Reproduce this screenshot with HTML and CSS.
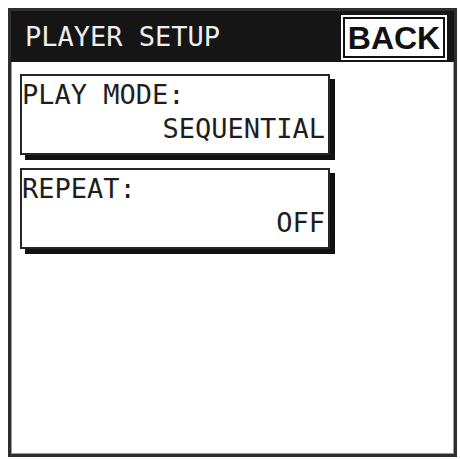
FILE: index.html
```html
<!DOCTYPE html>
<html>
<head>
<meta charset="utf-8">
<link rel="stylesheet" href="styles.css">
</head>
<body>
<div class="frame">
  <div class="header">
    <div class="title">PLAYER SETUP</div>
    <div class="back"><div class="back-inner">BACK</div></div>
  </div>
  <div class="content">
    <div class="card">
      <div class="label">PLAY MODE:</div>
      <div class="value">SEQUENTIAL</div>
    </div>
    <div class="card">
      <div class="label">REPEAT:</div>
      <div class="value">OFF</div>
    </div>
  </div>
</div>
</body>
</html>
```

FILE: styles.css
```css
html, body {
  margin: 0;
  padding: 0;
  background: #fff;
}

.frame {
  box-sizing: border-box;
  margin: 8px 0 0 8px;
  width: 449px;
  height: 449px;
  border: 3px solid #2e2e2e;
  box-shadow: inset 0 0 0 1px #9a9a9a;
  display: flex;
  flex-direction: column;
  font-family: "DejaVu Sans Mono", monospace;
}

.header {
  box-sizing: border-box;
  height: 51px;
  background: #151515;
  display: flex;
  justify-content: space-between;
  align-items: stretch;
  padding: 4px 7px 2px 14px;
}

.title {
  align-self: center;
  color: #eeeeee;
  font-size: 27px;
  line-height: 27px;
  margin-bottom: 3px;
}

.back {
  border: 2px solid #ffffff;
  display: flex;
}

.back-inner {
  box-sizing: border-box;
  width: 102px;
  border: 2px solid #111;
  background: #fff;
  color: #111;
  font-family: "Liberation Sans", Arial, sans-serif;
  font-weight: bold;
  font-size: 32px;
  display: flex;
  align-items: center;
  justify-content: center;
  line-height: 1;
}

.content {
  display: flex;
  flex-direction: column;
  gap: 13px;
  padding: 12px 0 0 9px;
}

.card {
  box-sizing: border-box;
  width: 310px;
  border: 2px solid #262626;
  box-shadow: 5px 5px 0 #111;
  padding: 5px 3px 11px 0;
  display: flex;
  flex-direction: column;
  gap: 7px;
  color: #1e1e1e;
  font-size: 27px;
  line-height: 27px;
  background: #fff;
}

.value {
  text-align: right;
}
```
